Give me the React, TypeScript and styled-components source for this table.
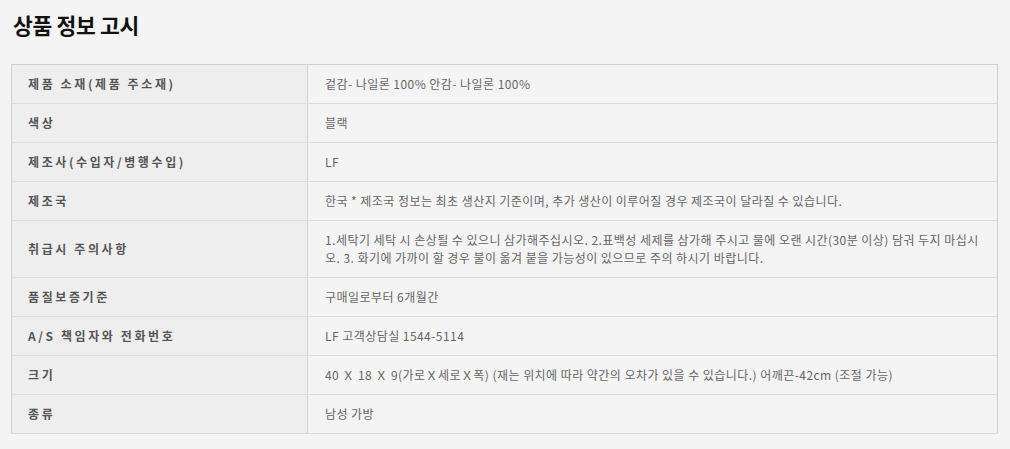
import styled, { createGlobalStyle } from "styled-components"

type InfoRow = {
  label: string
  value: React.ReactNode
}

const rows: InfoRow[] = [
  { label: "제품 소재(제품 주소재)", value: "겉감- 나일론 100% 안감- 나일론 100%" },
  { label: "색상", value: "블랙" },
  { label: "제조사(수입자/병행수입)", value: "LF" },
  { label: "제조국", value: "한국 * 제조국 정보는 최초 생산지 기준이며, 추가 생산이 이루어질 경우 제조국이 달라질 수 있습니다." },
  {
    label: "취급시 주의사항",
    value: (
      <>
        1.세탁기 세탁 시 손상될 수 있으니 삼가해주십시오. 2.표백성 세제를 삼가해 주시고 물에 오랜 시간(30분 이상) 담궈 두지 마십시
        <br />
        오. 3. 화기에 가까이 할 경우 불이 옮겨 붙을 가능성이 있으므로 주의 하시기 바랍니다.
      </>
    ),
  },
  { label: "품질보증기준", value: "구매일로부터 6개월간" },
  { label: "A/S 책임자와 전화번호", value: "LF 고객상담실 1544-5114" },
  { label: "크기", value: "40 Ｘ 18 Ｘ 9(가로Ｘ세로Ｘ폭) (재는 위치에 따라 약간의 오차가 있을 수 있습니다.) 어깨끈-42cm (조절 가능)" },
  { label: "종류", value: "남성 가방" },
]

const GlobalStyle = createGlobalStyle`
  body {
    margin: 0;
    background: #f4f4f4;
    font-family: "Noto Sans CJK KR", "Noto Sans", sans-serif;
  }
`

const Page = styled.section`
  padding: 10px 12px 0 11px;
`

const Title = styled.h2`
  margin: 0 0 24px 2px;
  font-size: 21.5px;
  line-height: 30px;
  font-weight: 700;
  color: #111;
  letter-spacing: -0.3px;
`

const Table = styled.table`
  width: 987px;
  border-collapse: collapse;
  border: 1px solid #cfcfcf;
  table-layout: fixed;
`

const Label = styled.th`
  box-sizing: border-box;
  width: 296px;
  padding: 10px 16px;
  background: #eeeeee;
  border-bottom: 1px solid #dcdcdc;
  border-right: 1px solid #d2d2d2;
  text-align: left;
  font-size: 12px;
  line-height: 18px;
  font-weight: 700;
  color: #555;
  letter-spacing: 2.6px;
  white-space: nowrap;
`

const Value = styled.td`
  padding: 10px 8px 10px 17px;
  border-bottom: 1px solid #dcdcdc;
  font-size: 12px;
  line-height: 18px;
  color: #666;
  letter-spacing: 0.45px;
  white-space: nowrap;
`

export default function App() {
  return (
    <Page>
      <GlobalStyle />
      <Title>상품 정보 고시</Title>
      <Table>
        <tbody>
          {rows.map((row) => (
            <tr key={row.label}>
              <Label>{row.label}</Label>
              <Value>{row.value}</Value>
            </tr>
          ))}
        </tbody>
      </Table>
    </Page>
  )
}
